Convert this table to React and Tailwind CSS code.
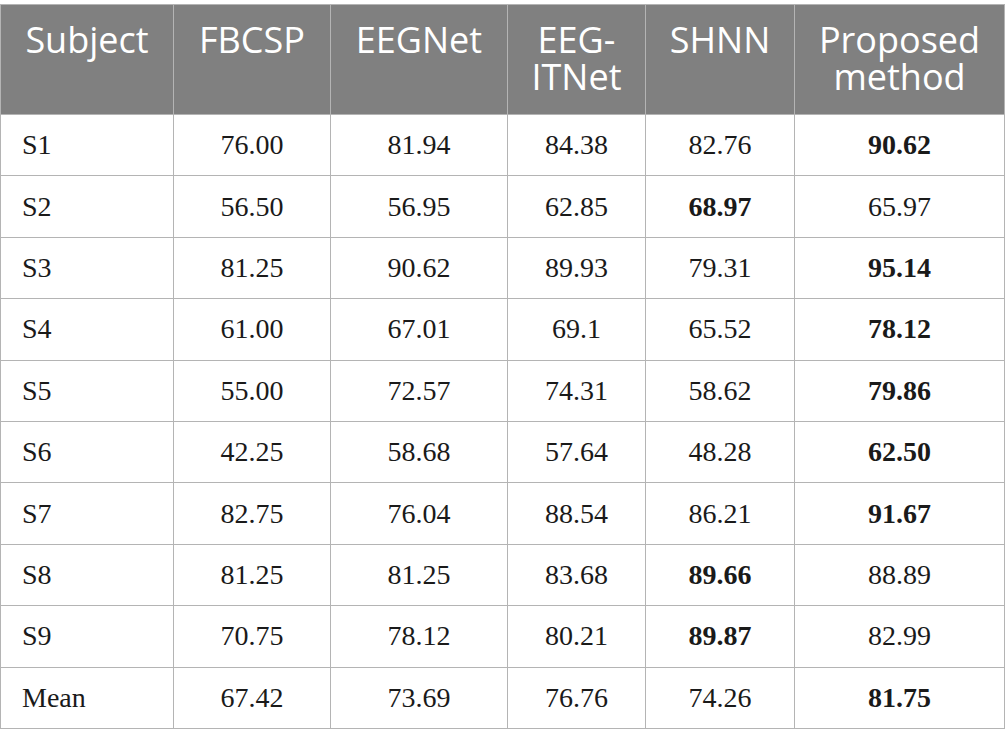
import React from "react";

const columns = ["Subject", "FBCSP", "EEGNet", "EEG-\nITNet", "SHNN", "Proposed\nmethod"];
const widths = ["w-[173px]", "w-[157px]", "w-[177px]", "w-[138px]", "w-[149px]", "w-[210px]"];

// bold marks the best result in each row
const rows = [
  { subject: "S1", values: ["76.00", "81.94", "84.38", "82.76", "90.62"], best: 4 },
  { subject: "S2", values: ["56.50", "56.95", "62.85", "68.97", "65.97"], best: 3 },
  { subject: "S3", values: ["81.25", "90.62", "89.93", "79.31", "95.14"], best: 4 },
  { subject: "S4", values: ["61.00", "67.01", "69.1", "65.52", "78.12"], best: 4 },
  { subject: "S5", values: ["55.00", "72.57", "74.31", "58.62", "79.86"], best: 4 },
  { subject: "S6", values: ["42.25", "58.68", "57.64", "48.28", "62.50"], best: 4 },
  { subject: "S7", values: ["82.75", "76.04", "88.54", "86.21", "91.67"], best: 4 },
  { subject: "S8", values: ["81.25", "81.25", "83.68", "89.66", "88.89"], best: 3 },
  { subject: "S9", values: ["70.75", "78.12", "80.21", "89.87", "82.99"], best: 3 },
  { subject: "Mean", values: ["67.42", "73.69", "76.76", "74.26", "81.75"], best: 4 },
];

export default function App() {
  return (
    <div className="w-[1005px] h-[747px] bg-white pt-[4px]">
      <table className="w-[1005px] table-fixed border-collapse">
        <colgroup>
          {widths.map((w, i) => (
            <col key={i} className={w} />
          ))}
        </colgroup>
        <thead>
          <tr className="h-[110px] bg-[#808080]">
            {columns.map((c, i) => (
              <th
                key={i}
                className="border border-[#b4b4b4] align-top pt-[16px] text-center font-normal text-white text-[36px] leading-[37px] whitespace-pre-line font-['Open_Sans',sans-serif]"
              >
                {c}
              </th>
            ))}
          </tr>
        </thead>
        <tbody className="font-['Liberation_Serif',serif] text-[28px] text-[#1a1a1a]">
          {rows.map((r) => (
            <tr key={r.subject} className="h-[61.4px]">
              <td className="border border-[#b4b4b4] pl-[21px] align-middle">{r.subject}</td>
              {r.values.map((v, i) => (
                <td
                  key={i}
                  className={`border border-[#b4b4b4] text-center align-middle ${i === r.best ? "font-bold" : ""}`}
                >
                  {v}
                </td>
              ))}
            </tr>
          ))}
        </tbody>
      </table>
    </div>
  );
}
